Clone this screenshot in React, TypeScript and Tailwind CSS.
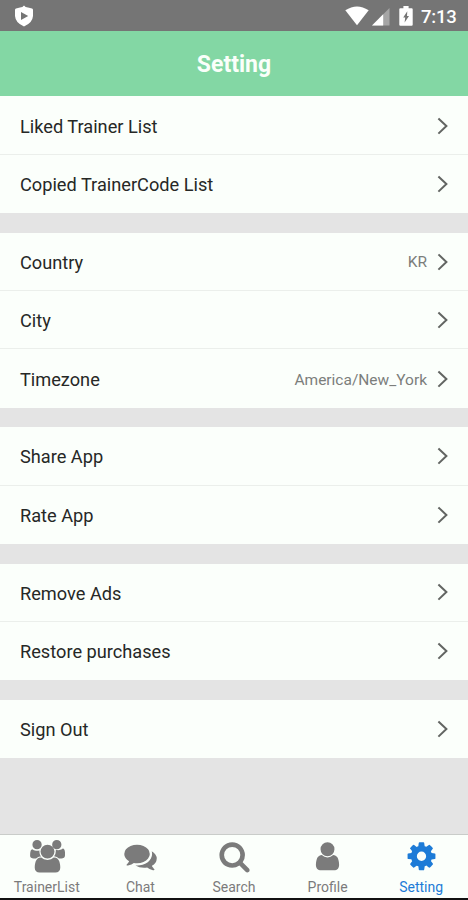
type Row = { label: string; value?: string }

const GROUPS: Row[][] = [
  [{ label: 'Liked Trainer List' }, { label: 'Copied TrainerCode List' }],
  [{ label: 'Country', value: 'KR' }, { label: 'City' }, { label: 'Timezone', value: 'America/New_York' }],
  [{ label: 'Share App' }, { label: 'Rate App' }],
  [{ label: 'Remove Ads' }, { label: 'Restore purchases' }],
  [{ label: 'Sign Out' }],
]

const TABS = [
  {
    label: 'TrainerList',
    viewBox: '-64 0 1920 1792',
    path: 'M529 896q-162 5-265 128h-134q-82 0-138-40.5t-56-118.5q0-353 124-353 6 0 43.5 21t97.5 42.5 119 21.5q67 0 133-23-5 37-5 66 0 159 93 294zm1071 637q0 120-73 189.5t-194 69.5h-874q-121 0-194-69.5t-73-189.5q0-53 3.5-103.5t14-109 26.5-108.5 43-97.5 62-81 85.5-53.5 111.5-20q10 0 43 21.5t73 48 107 48 135 21.5 135-21.5 107-48 73-48 43-21.5q61 0 111.5 20t85.5 53.5 62 81 43 97.5 26.5 108.5 14 109 3.5 103.5zm-1024-1277q0 106-75 181t-181 75-181-75-75-181 75-181 181-75 181 75 75 181zm704 384q0 159-112.5 271.5t-271.5 112.5-271.5-112.5-112.5-271.5 112.5-271.5 271.5-112.5 271.5 112.5 112.5 271.5zm576 225q0 78-56 118.5t-138 40.5h-134q-103-123-265-128 93-135 93-294 0-29-5-66 66 23 133 23 59 0 119-21.5t97.5-42.5 43.5-21q124 0 124 353zm-192-609q0 106-75 181t-181 75-181-75-75-181 75-181 181-75 181 75 75 181z',
  },
  {
    label: 'Chat',
    viewBox: '0 0 1792 1792',
    path: 'M1408 768q0 139-94 257t-256.5 186.5-353.5 68.5q-86 0-176-16-124 88-278 128-36 9-86 16h-3q-11 0-20.5-8t-11.5-21q-1-3-1-6.5t.5-6.5 2-6l2.5-5 3.5-5.5 4-5 4.5-5 4-4.5q5-6 23-25t26-29.5 22.5-29 25-38.5 20.5-44q-124-72-195-177t-71-224q0-139 94-257t256.5-186.5 353.5-68.5 353.5 68.5 256.5 186.5 94 257zm384 256q0 120-71 224.5t-195 176.5q10 24 20.5 44t25 38.5 22.5 29 26 29.5 23 25q1 1 4 4.5t4.5 5 4 5 3.5 5.5l2.5 5 2 6 .5 6.5-1 6.5q-3 14-13 22t-22 7q-50-7-86-16-154-40-278-128-90 16-176 16-271 0-472-132 58 4 88 4 161 0 309-45t264-129q125-92 192-212t67-254q0-77-23-152 129 71 204 178t75 230z',
  },
  {
    label: 'Search',
    viewBox: '0 0 1792 1792',
    path: 'M1216 832q0-185-131.5-316.5t-316.5-131.5-316.5 131.5-131.5 316.5 131.5 316.5 316.5 131.5 316.5-131.5 131.5-316.5zm512 832q0 52-38 90t-90 38q-54 0-90-38l-343-342q-179 124-399 124-143 0-273.5-55.5t-225-150-150-225-55.5-273.5 55.5-273.5 150-225 225-150 273.5-55.5 273.5 55.5 225 150 150 225 55.5 273.5q0 220-124 399l343 343q37 37 37 90z',
  },
  {
    label: 'Profile',
    viewBox: '0 0 1792 1792',
    path: 'M1536 1399q0 109-62.5 187t-150.5 78h-854q-88 0-150.5-78t-62.5-187q0-85 8.5-160.5t31.5-152 58.5-131 94-89 134.5-34.5q131 128 313 128t313-128q76 0 134.5 34.5t94 89 58.5 131 31.5 152 8.5 160.5zm-256-887q0 159-112.5 271.5t-271.5 112.5-271.5-112.5-112.5-271.5 112.5-271.5 271.5-112.5 271.5 112.5 112.5 271.5z',
  },
  {
    label: 'Setting',
    viewBox: '0 0 1792 1792',
    path: 'M1152 896q0-106-75-181t-181-75-181 75-75 181 75 181 181 75 181-75 75-181zm512-109v222q0 12-8 23t-20 13l-185 28q-19 54-39 91 35 50 107 138 10 12 10 25t-9 23q-27 37-99 108t-94 71q-12 0-26-9l-138-108q-44 23-91 38-16 136-29 186-7 28-36 28h-222q-14 0-24.5-8.5t-11.5-21.5l-28-184q-49-16-90-37l-141 107q-10 9-25 9-14 0-25-11-126-114-165-168-7-10-7-23 0-12 8-23 15-21 51-66.5t54-70.5q-27-50-41-99l-183-27q-13-2-21-12.5t-8-23.5v-222q0-12 8-23t19-13l186-28q14-46 39-92-40-57-107-138-10-12-10-24 0-10 9-23 26-36 98.5-107.5t94.5-71.5q13 0 26 10l138 107q44-23 91-38 16-136 29-186 7-28 36-28h222q14 0 24.5 8.5t11.5 21.5l28 184q49 16 90 37l142-107q9-9 24-9 13 0 25 10 129 119 165 170 7 8 7 22 0 12-8 23-15 21-51 66.5t-54 70.5q26 50 41 98l183 28q13 2 21 12.5t8 23.5z',
  },
]

function StatusBar() {
  return (
    <div className="flex h-[31px] shrink-0 items-center bg-[#757575] pr-[10px] pl-[14px] text-white">
      <svg className="mt-[1px] h-[22px] w-[20px]" viewBox="0 0 20 22">
        <path
          d="M10 .4Q11.3 2.2 14 2.5L18 3.4Q19 3.8 19 5V11Q18.5 18 10 21.4 1.5 18 1 11V5Q1 3.8 2 3.4L6 2.5Q8.7 2.2 10 .4zM7 7v8L14.2 11z"
          fill="currentColor"
          fillRule="evenodd"
        />
      </svg>
      <svg className="mt-[1px] ml-auto h-[20px] w-[24px]" viewBox="0 0 24 20">
        <path d="M.3 4.3Q12-3.5 23.7 4.3L12 19.3z" fill="currentColor" />
      </svg>
      <svg className="mt-[2px] ml-[2px] h-[18px] w-[19px]" viewBox="0 0 19 18">
        <path d="M18.5 0V17.5H1z" fill="#a5a5a5" />
        <path d="M12.2 6.2V17.5H1z" fill="currentColor" />
      </svg>
      <svg className="mt-[1px] ml-[9px] h-[20px] w-[14px]" viewBox="0 0 14 20">
        <path
          d="M4.4 0h5.2v2.2h3Q13.7 2.2 13.7 3.3V18.7Q13.7 19.8 12.6 19.8H1.4Q.3 19.8.3 18.7V3.3Q.3 2.2 1.4 2.2h3zM8.3 5.2 4.2 11.4H6.2L5.6 16.5 10 10H8z"
          fill="currentColor"
          fillRule="evenodd"
        />
      </svg>
      <span className="mt-[3px] ml-[8px] w-[37px] text-[18.5px] leading-none font-medium tracking-[-0.2px]">7:13</span>
    </div>
  )
}

function SettingRow({ label, value }: Row) {
  return (
    <div className="flex h-[58.35px] items-center border-b border-[#ebefeb] pr-[20px] pl-[20px] last:border-b-0">
      <span className="mt-[2px] text-[18.2px] text-[#262826]">{label}</span>
      {value && <span className="mt-[3px] ml-auto text-[15.5px] text-[#7b7e7b]">{value}</span>}
      <svg className={value ? 'mt-[0.5px] ml-[10px] h-[18px] w-[11px]' : 'mt-[0.5px] ml-auto h-[18px] w-[11px]'} viewBox="0 0 11 18">
        <path d="M1.4 1.4 9.4 9 1.4 16.6" fill="none" stroke="#626562" strokeWidth="2" />
      </svg>
    </div>
  )
}

export default function App() {
  return (
    <div className="flex h-[900px] w-[468px] flex-col overflow-hidden bg-[#e4e4e4] font-['Roboto',sans-serif]">
      <StatusBar />
      <header className="flex h-[65px] shrink-0 items-center justify-center bg-[#83d7a4] pt-[3px]">
        <h1 className="text-[23px] font-bold text-[#fafffa]">Setting</h1>
      </header>

      <main className="flex flex-1 flex-col gap-[19.5px]">
        {GROUPS.map((rows, i) => (
          <section key={rows[0].label} className={i === 0 ? 'bg-[#fbfffb] pt-[0.6px]' : 'bg-[#fbfffb]'}>
            {rows.map((row) => (
              <SettingRow key={row.label} {...row} />
            ))}
          </section>
        ))}
      </main>

      <nav className="flex h-[66px] shrink-0 border-t border-b-2 border-t-[#c9ccc9] border-b-[#111] bg-[#fbfffb]">
        {TABS.map((tab) => (
          <div
            key={tab.label}
            className={`flex flex-1 flex-col items-center pt-[5px] ${tab.label === 'Setting' ? 'text-[#1d7bd7]' : 'text-[#7b7b7b]'}`}
          >
            <svg className="ml-[0.5px] h-[32.5px] w-[35px]" viewBox={tab.viewBox}>
              <path d={tab.path} fill="currentColor" />
            </svg>
            <span className="mt-[6.5px] text-[14px] leading-[16px]">{tab.label}</span>
          </div>
        ))}
      </nav>
    </div>
  )
}
